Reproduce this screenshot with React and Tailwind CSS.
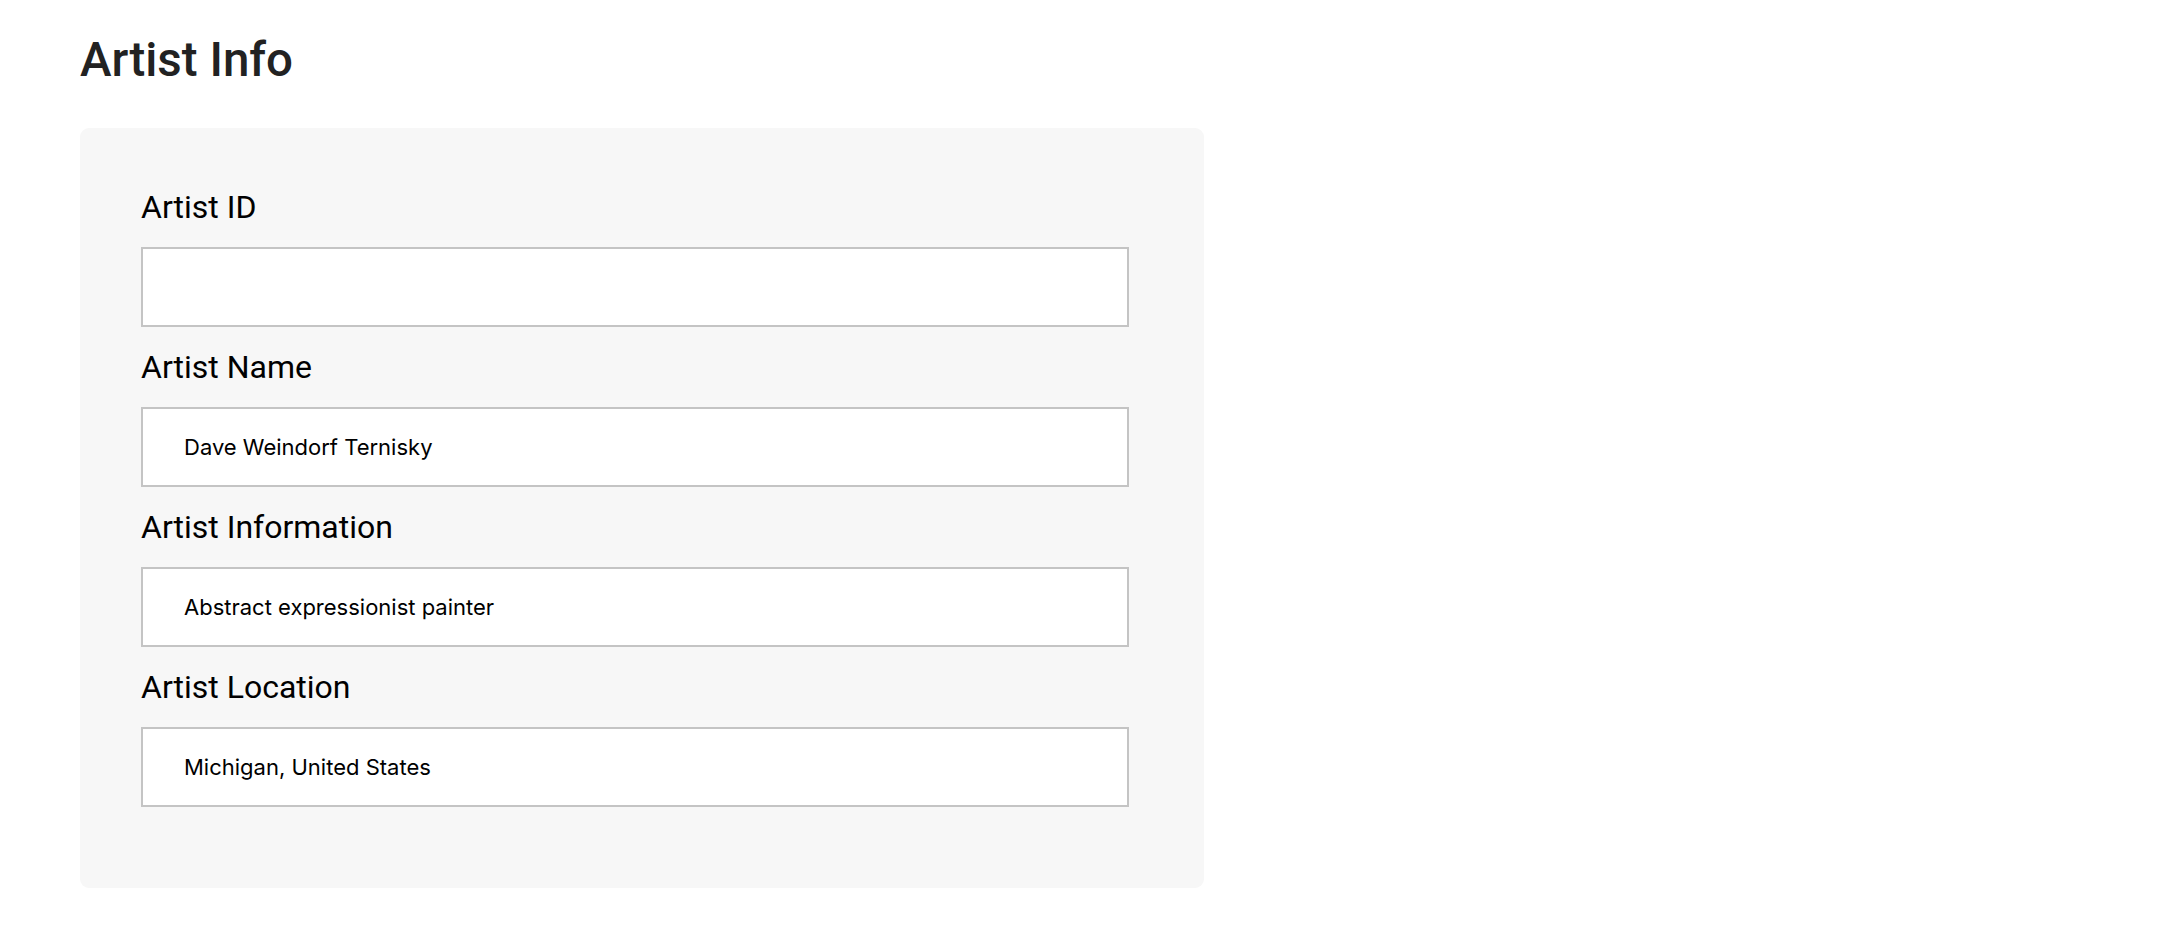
import React from "react";

const fields = [
  { label: "Artist ID", value: "" },
  { label: "Artist Name", value: "Dave Weindorf Ternisky" },
  { label: "Artist Information", value: "Abstract expressionist painter" },
  { label: "Artist Location", value: "Michigan, United States" },
];

export default function App() {
  return (
    <div className="min-h-[932px] bg-white px-[80px] pt-[32px]">
      <h1 className="font-['Roboto',sans-serif] text-[47.5px] leading-[56px] font-medium text-[#222222]">
        Artist Info
      </h1>
      <div className="mt-[40px] w-[1124px] rounded-[9px] bg-[#f7f7f7] pl-[61px] pt-[59px] pb-[81px]">
        <div className="flex flex-col gap-5">
          {fields.map((f) => (
            <div key={f.label} className="flex flex-col gap-5">
              <label className="font-['Roboto',sans-serif] text-[32px] leading-[40px] text-black">
                {f.label}
              </label>
              <div className="flex h-[80px] w-[988px] items-center border-2 border-[#c4c4c4] bg-white pl-[41px] font-['Inter',sans-serif] text-[22px] text-black">
                {f.value}
              </div>
            </div>
          ))}
        </div>
      </div>
    </div>
  );
}
